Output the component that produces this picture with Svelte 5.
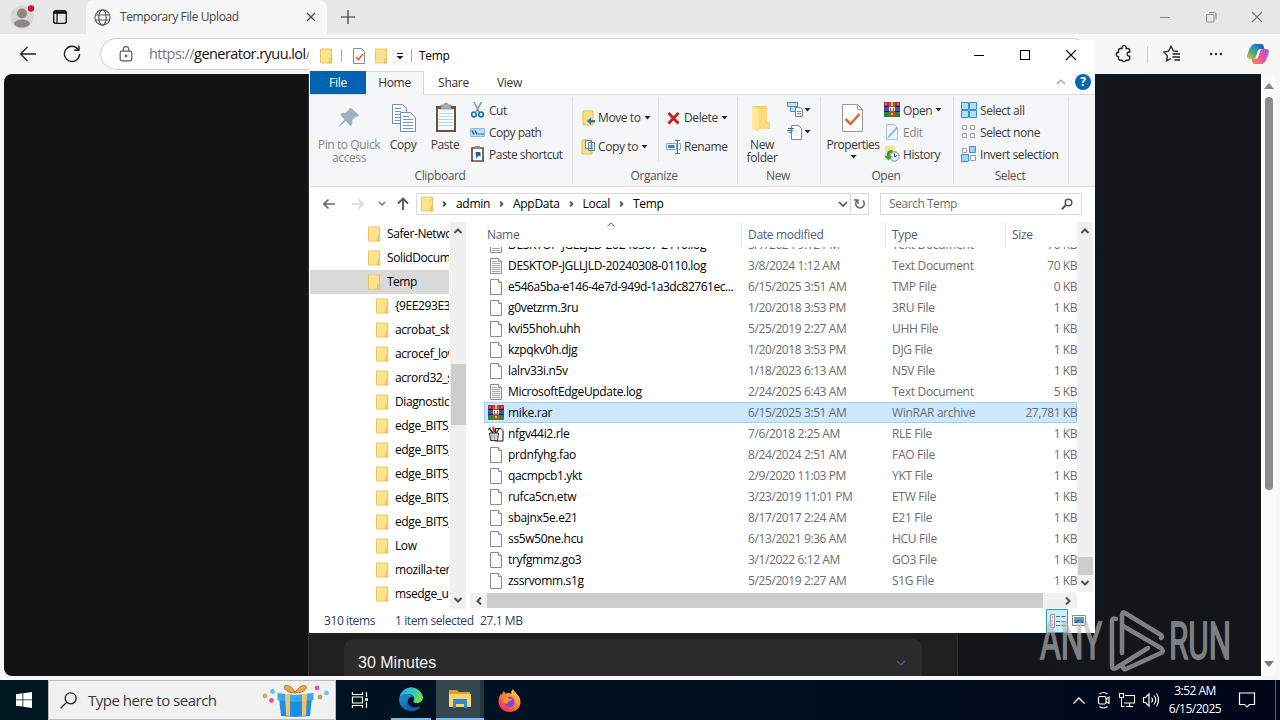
<script lang="ts">
  interface FileRow {
    name: string;
    date: string;
    type: string;
    size: string;
    icon?: string;
  }

  const files: FileRow[] = [
    { name: 'DESKTOP-JGLLJLD-20240307-2110.log', date: '3/7/2024 9:12 PM', type: 'Text Document', size: '70 KB', icon: 'log' },
    { name: 'DESKTOP-JGLLJLD-20240308-0110.log', date: '3/8/2024 1:12 AM', type: 'Text Document', size: '70 KB', icon: 'log' },
    { name: 'e546a5ba-e146-4e7d-949d-1a3dc82761ec...', date: '6/15/2025 3:51 AM', type: 'TMP File', size: '0 KB' },
    { name: 'g0vetzrm.3ru', date: '1/20/2018 3:53 PM', type: '3RU File', size: '1 KB' },
    { name: 'kvi55hoh.uhh', date: '5/25/2019 2:27 AM', type: 'UHH File', size: '1 KB' },
    { name: 'kzpqkv0h.djg', date: '1/20/2018 3:53 PM', type: 'DJG File', size: '1 KB' },
    { name: 'lalrv33i.n5v', date: '1/18/2023 6:13 AM', type: 'N5V File', size: '1 KB' },
    { name: 'MicrosoftEdgeUpdate.log', date: '2/24/2025 6:43 AM', type: 'Text Document', size: '5 KB', icon: 'log' },
    { name: 'mike.rar', date: '6/15/2025 3:51 AM', type: 'WinRAR archive', size: '27,781 KB', icon: 'rar' },
    { name: 'nfgv44i2.rle', date: '7/6/2018 2:25 AM', type: 'RLE File', size: '1 KB', icon: 'rle' },
    { name: 'prdnfyhg.fao', date: '8/24/2024 2:51 AM', type: 'FAO File', size: '1 KB' },
    { name: 'qacmpcb1.ykt', date: '2/9/2020 11:03 PM', type: 'YKT File', size: '1 KB' },
    { name: 'rufca5cn.etw', date: '3/23/2019 11:01 PM', type: 'ETW File', size: '1 KB' },
    { name: 'sbajnx5e.e21', date: '8/17/2017 2:24 AM', type: 'E21 File', size: '1 KB' },
    { name: 'ss5w50ne.hcu', date: '6/13/2021 9:36 AM', type: 'HCU File', size: '1 KB' },
    { name: 'tryfgmmz.go3', date: '3/1/2022 6:12 AM', type: 'GO3 File', size: '1 KB' },
    { name: 'zssrvomm.s1g', date: '5/25/2019 2:27 AM', type: 'S1G File', size: '1 KB' }
  ];

  const folders = [
    'Safer-Networking', 'SolidDocuments', 'Temp', '{9EE293E3-8F1C}', 'acrobat_sbx', 'acrocef_low',
    'acrord32_sbx', 'Diagnostics', 'edge_BITS_1', 'edge_BITS_2', 'edge_BITS_3', 'edge_BITS_4',
    'edge_BITS_5', 'Low', 'mozilla-temp', 'msedge_url'
  ];

  const crumbs = ['admin', 'AppData', 'Local', 'Temp'];

  let selected = $state('mike.rar');
</script>

{#snippet folder()}
  <svg class="i16" viewBox="0 0 16 16">
    <path d="M2.500 1h11v14h-11z" fill="#fbdf83" stroke="#e9c65e" />
    <path d="M3 1.500h8v13H3z" fill="#ffe38d" />
    <path d="M12.500 10l1.500 1v4h-3z" fill="#f8d468" stroke="#dfb650" stroke-width=".7" />
  </svg>
{/snippet}

{#snippet rar()}
  <svg class="i16" viewBox="0 0 16 16" shape-rendering="crispEdges">
    <path d="M0 0h16v5H0z" fill="#b52a3c" />
    <path d="M0 5h16v5H0z" fill="#3b52b4" />
    <path d="M0 10h16v5H0z" fill="#28833c" />
    <path d="M0 4h16v1H0zM0 9h16v1H0z" fill="#301c40" />
    <path d="M5 0h6v15H5z" fill="#a25a2a" />
    <path d="M5 5h6v4H5z" fill="#f1e9e4" />
    <path d="M6 6h1v3H6zM9 6h1v3H9z" fill="#be3d33" />
    <path d="M7 0h2v4H7zM7 11h2v2H7z" fill="#e7b14b" />
    <path d="M1 1h2v2H1zM13 1h2v2h-2z" fill="#e0566a" />
  </svg>
{/snippet}

{#snippet fileIcon(kind: string)}
  {#if kind === 'rar'}
    {@render rar()}
  {:else if kind === 'rle'}
    <svg class="i16" viewBox="0 0 16 16">
      <path d="M7.500 2.500h5.500l2 2v10.500h-8z" fill="#fff" stroke="#111" />
      <path d="M1.500 7h9L9.500 14.500h-7z" fill="#ddd" stroke="#333" />
      <path d="M4 8v5.500M6.500 8v5.500" stroke="#999" />
      <path d="M1 2l4 5" stroke="#222" stroke-width="1.500" />
      <path d="M5 1l1.500 5.500" stroke="#d82035" stroke-width="2" />
      <path d="M11 3L8 7" stroke="#444" stroke-width="1.300" />
      <path d="M0 3.500h2M2 1v2" stroke="#28a" />
    </svg>
  {:else}
    <svg class="i16" viewBox="0 0 16 16">
      <path d="M2.500.5h8l3 3v12h-11z" fill="#fcfcfc" stroke="#8b8b8b" />
      <path d="M10.500.5v3h3" fill="#eee" stroke="#8b8b8b" />
      {#if kind === 'log'}
        <path d="M4 5.500h8M4 7.500h8M4 9.500h8M4 11.500h8M4 13.500h8M4 3.500h5" stroke="#a4a8aa" />
      {/if}
    </svg>
  {/if}
{/snippet}

{#snippet chev(d: string)}
  <svg class="chev" viewBox="0 0 10 10"><path {d} fill="none" stroke="#505050" stroke-width="2" /></svg>
{/snippet}

{#snippet caret()}
  <svg class="caret" viewBox="0 0 7 4"><path d="M.5 0h6l-3 3.500z" fill="#222" /></svg>
{/snippet}

<div class="desktop">
  <div class="browser">
    <div class="tabstrip">
      <svg class="avatar" viewBox="0 0 26 26">
        <circle cx="12" cy="14" r="11.500" fill="#d9d7d5" />
        <circle cx="12" cy="10.500" r="5" fill="#8b8785" />
        <ellipse cx="12" cy="20.500" rx="8" ry="4" fill="#8b8785" />
        <circle cx="21" cy="5.500" r="3.200" fill="#d4122c" />
      </svg>
      <svg class="workspaces" viewBox="0 0 16 16">
        <rect x="1.700" y="1.700" width="12.600" height="12.600" rx="2" fill="none" stroke="#111" stroke-width="1.300" />
        <path d="M2 3.500h12" stroke="#111" stroke-width="2.600" />
        <path d="M5 4v10" stroke="#111" stroke-width="1.200" />
      </svg>
      <div class="tab">
        <svg class="i17" viewBox="0 0 17 17" fill="none" stroke="#5d5d5d" stroke-width="1.200">
          <circle cx="8.500" cy="8.500" r="7.600" />
          <ellipse cx="8.500" cy="8.500" rx="3.700" ry="7.600" />
          <path d="M1.500 6h14M1.500 11h14" />
        </svg>
        <span class="tab-title">Temporary File Upload</span>
        <svg class="tab-close" viewBox="0 0 10 10"><path d="M1 1l8 8M9 1L1 9" stroke="#444" stroke-width="1.200" /></svg>
      </div>
      <svg class="new-tab" viewBox="0 0 14 14"><path d="M7 0v14M0 7h14" stroke="#333" stroke-width="1.200" /></svg>
      <div class="win-buttons">
        <svg viewBox="0 0 12 12"><path d="M1 6.500h10" stroke="#888" /></svg>
        <svg viewBox="0 0 12 12" fill="none" stroke="#888"><rect x="1.500" y="3.500" width="7.500" height="7.500" rx="1" /><path d="M4 1.500h5.500q1.500 0 1.500 1.500v5.500" /></svg>
        <svg viewBox="0 0 12 12"><path d="M1 1l10 10M11 1L1 11" stroke="#777" stroke-width="1.100" /></svg>
      </div>
    </div>
    <div class="toolbar">
      <svg class="back" viewBox="0 0 18 16" fill="none" stroke="#222" stroke-width="1.300"><path d="M17 8H2M8.500 1L1.500 8l7 7" /></svg>
      <svg class="reload" viewBox="0 0 18 18" fill="none" stroke="#222" stroke-width="1.400"><path d="M15.200 4.500A7.600 7.600 0 1 0 16.600 9M16 .5v4.700h-4.800" /></svg>
      <div class="url">
        <svg class="lock" viewBox="0 0 14 16" fill="none" stroke="#5d5d5d" stroke-width="1.200"><rect x="1.200" y="5.200" width="11.600" height="9.600" rx="1.800" /><path d="M4.200 5V3.500a2.800 2.800 0 0 1 5.600 0V5" /><circle cx="7" cy="10" r=".8" fill="#5d5d5d" /></svg>
        <span>https://<b>generator.ryuu.lol</b>/</span>
      </div>
      <div class="tools">
        <svg class="ext" viewBox="0 0 18 18" fill="none" stroke="#222" stroke-width="1.400"><path d="M3.500 5.500q0-2 2-2H7a2.200 2.200 0 1 1 4.200 0h1.500q2 0 2 2V7h-1a2.200 2.200 0 0 0 0 4.200h1v2q0 2-2 2H11a2.200 2.200 0 0 1-4 0H5.500q-2 0-2-2v-1.500a2.200 2.200 0 0 1 0-4.400z" /></svg>
        <i></i>
        <svg class="fav" viewBox="0 0 18 18" fill="none" stroke="#222" stroke-width="1.300"><path d="M15 6.500l-4.700-.5L8 1.200 5.600 6.100.9 6.900l3.500 3.700-.8 5.200 4.400-2.300M9.500 9H17M9.500 12H17M11.500 15H17" /></svg>
        <svg class="dots" viewBox="0 0 18 18" fill="#222"><circle cx="4" cy="9" r="1.200" /><circle cx="9" cy="9" r="1.200" /><circle cx="14" cy="9" r="1.200" /></svg>
        <svg class="copilot" viewBox="0 0 22 20">
          <defs>
            <linearGradient id="cpA" x1="0" y1="1" x2="1" y2="0"><stop offset="0" stop-color="#f4c735" /><stop offset=".35" stop-color="#4fae6c" /><stop offset=".65" stop-color="#1b8fd6" /><stop offset="1" stop-color="#1749b8" /></linearGradient>
            <linearGradient id="cpB" x1="0" y1="1" x2="1" y2="0"><stop offset="0" stop-color="#f98a47" /><stop offset=".5" stop-color="#e7529d" /><stop offset="1" stop-color="#a45ce8" /></linearGradient>
          </defs>
          <path d="M7 0h7q2 0 2.600 2l.8 3h-4q-2 0-2.600 2l-2 6q-.6 2-2.400 2H3q-3 0-3-3Q3 1 7 0z" fill="url(#cpA)" />
          <path d="M15 20H8q-2 0-2.600-2l-.8-3h4q2 0 2.600-2l2-6q.6-2 2.400-2H19q3 0 3 3-3 11-7 12z" fill="url(#cpB)" />
          <path d="M13 7l-2.700 6.500q-.5 1.300-1.800 1.300l2.700-7q.5-1.300 1.800-.8z" fill="#f7f7f7" />
        </svg>
      </div>
    </div>
    <div class="viewport">
      <div class="page">
        <div class="card">
          <div class="duration">
            <span>30 Minutes</span>
            <svg viewBox="0 0 10 6"><path d="M1 1l4 4 4-4" fill="none" stroke="#2f5d9e" stroke-width="1.400" /></svg>
          </div>
        </div>
      </div>
      <div class="page-scroll">
        <svg viewBox="0 0 10 6"><path d="M0 6l5-6 5 6z" fill="#888" /></svg>
        <div class="page-thumb"></div>
        <svg viewBox="0 0 10 6"><path d="M0 0l5 6 5-6z" fill="#777" /></svg>
      </div>
    </div>
  </div>

  <div class="taskbar">
    <div class="start">
      <svg viewBox="0 0 16 16" fill="#fff"><path d="M0 2.200l6.500-.9v6.200H0zM7.300 1.200L16 0v7.500H7.300zM0 8.300h6.500v6.300L0 13.700zM7.300 8.300H16V16l-8.700-1.300z" /></svg>
    </div>
    <div class="search">
      <svg class="glass" viewBox="0 0 17 17" fill="none" stroke="#222" stroke-width="1.300"><circle cx="10.700" cy="6.300" r="5.500" /><path d="M6.800 10.200L.7 16.300" /></svg>
      <span>Type here to search</span>
      <svg class="gift" viewBox="0 0 68 36">
        <g><circle cx="3" cy="14" r="2.400" fill="#d8a66a" /><circle cx="10.500" cy="9.500" r="2.400" fill="#58cbd6" /><circle cx="9.500" cy="18.500" r="2.400" fill="#ec4fa6" /><circle cx="55" cy="6" r="2.400" fill="#ec4fa6" /><circle cx="64.500" cy="11" r="2.400" fill="#63cbed" /><circle cx="58" cy="15" r="2.400" fill="#c99a52" /></g>
        <path d="M17 15h33l-2 19-15 1-14-1z" fill="#1d8fe0" />
        <path d="M15.500 11l17 2 19-2v7l-19 2-17-2z" fill="#37aaf2" />
        <path d="M23 12h5v22l-4-.5zM40 12h5l-1 21.500-4 .5z" fill="#f5c266" />
        <path d="M33 11C23 11 20 4 24 3.500s7 3 9 7c3-4 7-8 10-7s2 7-10 7.500z" fill="#e7a944" stroke="#b97c28" />
      </svg>
    </div>
    <div class="task">
      <svg class="i18" viewBox="0 0 18 18" fill="none" stroke="#fff" stroke-width="1.200"><path d="M1.500 1v2.500h10V1M1.500 17v-2.500h10V17M1.500 6h10v6h-10zM15.500 1v5M15.500 11v6" /><path d="M14 8.500h3" stroke-width="2.500" /></svg>
    </div>
    <div class="task open edge">
      <svg viewBox="0 0 24 24">
        <defs>
          <linearGradient id="edA" x1="0" y1="0" x2="1" y2=".3"><stop offset="0" stop-color="#21a7dd" /><stop offset=".6" stop-color="#35c6c0" /><stop offset="1" stop-color="#66e254" /></linearGradient>
          <linearGradient id="edB" x1="0" y1="0" x2="1" y2="1"><stop offset="0" stop-color="#1c8fd8" /><stop offset="1" stop-color="#134f9d" /></linearGradient>
        </defs>
        <path d="M.3 11A12 12 0 0 1 24 10c0 4-3 6-6 6-4 0-4-2-3-3.300C16 10 13 7 9 7c-4 0-7 2-8.700 4z" fill="url(#edA)" />
        <path d="M0 12c1-3 5-5 9-5 3 0 5 1.500 5.800 3-3-.8-6.300 1-6 5 .4 5 6 7 12.700 4.500C18 25 10 25 5.500 22 1.500 19.500 0 16 0 12z" fill="url(#edB)" />
        <path d="M8.900 13.500C8 19 14 23 21.500 19.300 19 23 15.500 24 12 24 7 22 6 17 8.900 13.500z" fill="#155cae" />
      </svg>
    </div>
    <div class="task open files">
      <svg viewBox="0 0 24 20">
        <path d="M1 1h8l2 2h11v15H1z" fill="#e79a27" />
        <path d="M1 5h22v13H1z" fill="#fbd56b" />
        <path d="M5 11q0-1 1-1h12q1 0 1 1v8h-3v-4H8v4H5z" fill="#3989c9" />
      </svg>
    </div>
    <div class="task firefox">
      <svg viewBox="0 0 24 24">
        <defs><linearGradient id="ff" x1="1" y1="0" x2=".2" y2="1"><stop offset="0" stop-color="#fff04b" /><stop offset=".4" stop-color="#ff9a2e" /><stop offset="1" stop-color="#f0245e" /></linearGradient></defs>
        <path d="M3 5l1 1 2-4 2 3c2-1 4-1 6 0-.5-2 0-3 1.500-5C17 4 23 6 23.500 13c0 7-5 11-11.500 11S.500 19 .500 13C.500 9 2 7 3 5z" fill="url(#ff)" />
        <circle cx="12" cy="13.500" r="5.300" fill="#7b46df" />
        <path d="M5 10c2-2 5-1.500 7 .5h3c-1 2-3 2-4 2.500-1 1-.5 2.500-2 2.500-2 0-4-2-4-5.500z" fill="#ff9530" />
      </svg>
    </div>
    <div class="tray">
      <svg class="up" viewBox="0 0 12 7" fill="none" stroke="#fff" stroke-width="1.300"><path d="M.5 6.500L6 1l5.500 5.500" /></svg>
      <svg viewBox="0 0 18 18" fill="none" stroke="#fff" stroke-width="1.200"><rect x="3.500" y="5.500" width="7.500" height="7.500" rx="1.500" /><path d="M11 8l3-2v6.500l-3-2M4.500 3Q8.500 0 12.500 3M4.500 15.500q4 3 8 0" /></svg>
      <svg viewBox="0 0 18 18" fill="none" stroke="#fff" stroke-width="1.100"><path d="M6 4.500h9.500v7.500H5M10.500 12v3.500M7 15.500h7M.5 2.500h4v4h-4zM2.500 7v8.500h3M0 2.500h5" /></svg>
      <svg viewBox="0 0 18 18" fill="none" stroke="#fff" stroke-width="1.200"><path d="M.5 6.500h2L6 3v12l-3.500-3.500h-2zM8.500 6.500q2 2.500 0 5M11 4.500q3.500 4.500 0 9M13.500 2.500q4 6.500 0 13" /></svg>
      <div class="clock"><span>3:52 AM</span><span>6/15/2025</span></div>
      <svg class="notify" viewBox="0 0 18 18" fill="none" stroke="#fff" stroke-width="1.200"><path d="M1.500 2h15v11.500h-5L9 16l-2.500-2.500h-5z" /></svg>
    </div>
  </div>

  <div class="explorer">
    <div class="titlebar">
      {@render folder()}
      <i class="bar"></i>
      <svg class="i16 check" viewBox="0 0 16 16"><path d="M2.500.5h8l3 3v12h-11z" fill="#fff" stroke="#7d8da3" /><path d="M5 9l2.500 2.500L12 6" fill="none" stroke="#d95f2b" stroke-width="1.600" /></svg>
      {@render folder()}
      <svg class="customize" viewBox="0 0 8 8"><path d="M1 1.500h6" stroke="#222" /><path d="M.5 4h7L4 7.500z" fill="#222" /></svg>
      <i class="bar second"></i>
      <span class="window-title">Temp</span>
      <div class="controls">
        <svg viewBox="0 0 12 12"><path d="M1 5.500h10" stroke="#000" /></svg>
        <svg viewBox="0 0 12 12"><rect x="1.500" y=".5" width="9" height="9" fill="none" stroke="#000" /></svg>
        <svg viewBox="0 0 12 12"><path d="M1 0l10 10M11 0L1 10" stroke="#000" stroke-width="1.100" /></svg>
      </div>
    </div>

    <div class="tabs">
      <span class="file">File</span>
      <span class="home">Home</span>
      <span class="share">Share</span>
      <span class="view">View</span>
      <svg class="collapse" viewBox="0 0 10 6"><path d="M1 5l4-4 4 4" fill="none" stroke="#999" stroke-width="1.200" /></svg>
      <span class="help">?</span>
    </div>

    <div class="ribbon">
      <div class="group clipboard">
        <div class="body">
          <div class="big pin">
            <svg viewBox="0 0 32 32"><path d="M18 6l8 7-2 2-1-.5-4 4q1 4-1.500 5.500l-5-5-6 5.500-1 .5.500-1.500 5.500-6-4.500-5q2-2.500 5.500-1.500l4-4-.5-1z" fill="#9eb0c3" /></svg>
            <span>Pin to Quick access</span>
          </div>
          <div class="big">
            <svg viewBox="0 0 32 32"><g fill="#fff" stroke="#7391ae"><path d="M5.500 2.500h10l4 4v15h-14z" /><path d="M13.500 10.500h10l5 5v14h-15z" /></g><path d="M8 6.500h6M8 9.500h6M8 12.500h5M8 15.500h5M8 18.500h5M16 14.500h6M16 17.500h10M16 20.500h10M16 23.500h10M16 26.500h10" stroke="#5d9fdc" /></svg>
            <span>Copy</span>
          </div>
          <div class="big">
            <svg viewBox="0 0 32 32"><path d="M7 4h20v26H7z" fill="#6f5138" /><path d="M9 7h16v21H9z" fill="#f5faff" /><path d="M12 3h3a2 2 0 0 1 4 0h3v4H12z" fill="#a9adb2" stroke="#777" stroke-width=".6" /><path d="M10 11.500h14M10 14.500h14M10 17.500h14M10 20.500h14M10 23.500h14" stroke="#b9d5ec" /></svg>
            <span>Paste</span>
          </div>
          <div class="small first">
            <div>
              <svg class="i16" viewBox="0 0 16 16"><path d="M4 0l5 10M11.500 0L6 10" stroke="#7494ae" stroke-width="1.500" /><g fill="none" stroke="#1c75bb" stroke-width="1.700"><circle cx="4" cy="12.500" r="2.300" /><circle cx="11" cy="12.500" r="2.300" /></g></svg>
              <span>Cut</span>
            </div>
            <div>
              <svg class="i16" viewBox="0 0 16 16"><path d="M.5 4.500h14v8H.5z" fill="#b8e2fa" stroke="#8abde0" /><path d="M2 6.500l2 4M5 6.500l2 4M8.500 10h1M10.500 10h1M12.500 10h1" stroke="#174773" stroke-width="1.300" /></svg>
              <span>Copy path</span>
            </div>
            <div>
              <svg class="i16" viewBox="0 0 16 16"><path d="M2 2h11v13H2z" fill="#fff" stroke="#654b36" stroke-width="1.700" /><path d="M5 0h5v3H5z" fill="#8d8d8d" /><path d="M5.500 6h5v5L8.800 9.500 6 12.500V9z" fill="#1f5fa9" /></svg>
              <span>Paste shortcut</span>
            </div>
          </div>
        </div>
        <div class="label">Clipboard</div>
      </div>

      <div class="group organize">
        <div class="body">
          <div class="small two">
            <div>
              <svg class="i16" viewBox="0 0 16 16"><path d="M2 1h10v14H2z" fill="#fbdf83" stroke="#e4bf55" /><path d="M6 11l4-3.500V10h4v2.500h-4V15z" fill="#2b74ba" /></svg>
              <span>Move to</span>{@render caret()}
            </div>
            <div>
              <svg class="i16" viewBox="0 0 16 16"><path d="M1 1h10v14H1z" fill="#fbdf83" stroke="#e4bf55" /><path d="M4.500 1.500h6v8h-6zM7.500 3.500h6v8h-6z" fill="#fff" stroke="#5682ad" /><path d="M9 6h3M9 8h3M9 10h3" stroke="#5682ad" /></svg>
              <span>Copy to</span>{@render caret()}
            </div>
          </div>
          <div class="small two right">
            <div>
              <svg class="i16" viewBox="0 0 16 16"><path d="M2.500 3l10 10.500M12.500 3l-10 10.500" stroke="#d51a20" stroke-width="2.800" /></svg>
              <span>Delete</span>{@render caret()}
            </div>
            <div>
              <svg class="i16" viewBox="0 0 16 16"><path d="M.5 4.500h10v6H.500zM12.500 4.500h2v6h-2" fill="#fff" stroke="#89a3bb" /><path d="M2 6h6.500v3H2z" fill="#2f83c7" /><path d="M9 1.500h5M11.500 2v12M9 14.500h5" stroke="#5e6b76" /></svg>
              <span>Rename</span>
            </div>
          </div>
        </div>
        <div class="label">Organize</div>
      </div>

      <div class="group new">
        <div class="body">
          <div class="big folder-big">
            <svg viewBox="0 0 32 32"><path d="M6 4h15v23H6z" fill="#f5cf68" /><path d="M6 4l7 3v23l-7-3z" fill="#ffe59b" /><path d="M13 7h8v12l3 1v7H13z" fill="#fada7b" /></svg>
            <span>New folder</span>
          </div>
          <div class="small icons">
            <div>
              <svg class="i16" viewBox="0 0 16 16" fill="#fff" stroke="#5688ab"><path d="M.5.5h10v4H.5zM3.500 4.500h7v5h-7z" fill="#bfe1ef" /><path d="M8.500 5.500h5l2 2v7h-7z" /><path d="M10 9.500h4M10 11.500h4" stroke="#888" /></svg>{@render caret()}
            </div>
            <div>
              <svg class="i16" viewBox="0 0 16 16" fill="#fff" stroke="#778898"><path d="M4.500 1.500h7l3 3v11h-10z" /><path d="M1 4.500h6M0 6.500h6M2 8.500h3" stroke="#2278b8" /></svg>{@render caret()}
            </div>
          </div>
        </div>
        <div class="label">New</div>
      </div>

      <div class="group opening">
        <div class="body">
          <div class="big props">
            <svg viewBox="0 0 32 32"><path d="M5.500 2.500h15l5 5v22h-20z" fill="#fff" stroke="#999" /><path d="M20.500 2.500v5h5" fill="none" stroke="#999" /><path d="M8.500 17l5 5 9-10" fill="none" stroke="#ec642b" stroke-width="2.500" /></svg>
            <span>Properties</span>{@render caret()}
          </div>
          <div class="small">
            <div>{@render rar()}<span>Open</span>{@render caret()}</div>
            <div class="disabled">
              <svg class="i16" viewBox="0 0 16 16"><path d="M2.500.5h8l3 3v12h-11z" fill="#eef4fa" stroke="#abc0d2" /><path d="M14 4l-8 9-2 1 .5-2.500L12.500 3z" fill="#9bb7d2" /></svg>
              <span>Edit</span>
            </div>
            <div>
              <svg class="i16" viewBox="0 0 16 16"><path d="M1 0h10v14H1z" fill="#fde285" /><circle cx="10.500" cy="10.500" r="4.700" fill="#e4edf1" stroke="#7c8b94" /><path d="M10.500 7.500v3.500l2.500-1.500" fill="none" stroke="#345" /><path d="M8 4Q2 4 3 10l-3-.5 4.500 5L8 10H5.500Q5 7 9 6z" fill="#29a144" /></svg>
              <span>History</span>
            </div>
          </div>
        </div>
        <div class="label">Open</div>
      </div>

      <div class="group selecting">
        <div class="body">
          <div class="small">
            <div>
              <svg class="i16" viewBox="0 0 16 16" fill="#b5defb" stroke="#3a8fd2"><path d="M.5.5h7v7h-7zM8.500.5h7v7h-7zM.5 8.500h7v7h-7zM8.500 8.500h7v7h-7z" /></svg>
              <span>Select all</span>
            </div>
            <div>
              <svg class="i16" viewBox="0 0 16 16" fill="#fff" stroke="#9a9a9a"><path d="M1.500 1.500h4v4h-4zM9.500 1.500h4v4h-4zM1.500 9.500h4v4h-4zM9.500 9.500h4v4h-4z" /></svg>
              <span>Select none</span>
            </div>
            <div>
              <svg class="i16" viewBox="0 0 16 16"><path d="M8.500.5h6v6h-6zM.5 8.500h7v7h-7z" fill="#9fd5fb" stroke="#3a8fd2" /><path d="M1.500 2.500h4v4h-4zM9.500 9.500h5v5h-5z" fill="#fff" stroke="#9a9a9a" /></svg>
              <span>Invert selection</span>
            </div>
          </div>
        </div>
        <div class="label">Select</div>
      </div>
    </div>

    <div class="address">
      <svg class="arrow" viewBox="0 0 14 14" fill="none" stroke="#666" stroke-width="1.700"><path d="M13 7H2M6.500 2.500L2 7l4.500 4.500" /></svg>
      <svg class="arrow forward" viewBox="0 0 14 14" fill="none" stroke="#d5d5d5" stroke-width="1.700"><path d="M1 7h11M7.500 2.500L12 7l-4.500 4.500" /></svg>
      <svg class="recent" viewBox="0 0 8 6"><path d="M1 1l3 3 3-3" fill="none" stroke="#777" stroke-width="1.500" /></svg>
      <svg class="arrow upward" viewBox="0 0 14 14" fill="none" stroke="#555" stroke-width="1.800"><path d="M7 13V2M2 6.500l5-5 5 5" /></svg>
      <div class="path">
        {@render folder()}
        {#each crumbs as crumb}
          {@render chev('M3.500 2.500L6 5 3.500 7.500')}
          <span>{crumb}</span>
        {/each}
        <div class="path-end">
          <svg viewBox="0 0 10 6"><path d="M1 1l4 4 4-4" fill="none" stroke="#555" stroke-width="1.700" /></svg>
        </div>
      </div>
      <div class="refresh">
        <svg viewBox="0 0 12 12" fill="none" stroke="#666" stroke-width="1.500"><path d="M9 2.500a4.300 4.300 0 1 1-6 0M4 6V2H0" /></svg>
      </div>
      <div class="find">
        <span>Search Temp</span>
        <svg viewBox="0 0 12 12" fill="none" stroke="#555" stroke-width="1.500"><circle cx="7.500" cy="4.500" r="3.300" /><path d="M5 7L.8 11.200" stroke-width="2" /></svg>
      </div>
    </div>

    <div class="content">
      <div class="tree">
        {#each folders as name, i}
          <div class="node" class:child={i > 2} class:current={name === 'Temp'}>
            {@render folder()}
            <span>{name}</span>
          </div>
        {/each}
      </div>
      <div class="vscroll tree-scroll">
        {@render chev('M1.500 7L5 3.500 8.500 7')}
        <div class="thumb"></div>
        {@render chev('M1.500 3L5 6.500 8.500 3')}
      </div>
      <div class="listing">
        <div class="upper">
          <div class="table">
            <div class="head">
              <span class="c-name">Name<svg viewBox="0 0 8 5"><path d="M.5 4.500L4 1l3.500 3.500" fill="none" stroke="#666" /></svg></span>
              <span class="c-date">Date modified</span>
              <span class="c-type">Type</span>
              <span class="c-size">Size</span>
            </div>
            <div class="rows">
              {#each files as f}
                <!-- svelte-ignore a11y_click_events_have_key_events, a11y_no_static_element_interactions -->
                <div class="row" class:selected={f.name === selected} onclick={() => (selected = f.name)}>
                  {@render fileIcon(f.icon ?? 'blank')}
                  <span class="name" class:long={f.name.endsWith('...')}>{f.name}</span>
                  <span class="date">{f.date}</span>
                  <span class="type">{f.type}</span>
                  <span class="size">{f.size}</span>
                </div>
              {/each}
            </div>
          </div>
          <div class="vscroll list-scroll">
            {@render chev('M1.500 7L5 3.500 8.500 7')}
            <div class="thumb"></div>
            {@render chev('M1.500 3L5 6.500 8.500 3')}
          </div>
        </div>
        <div class="hscroll">
          {@render chev('M7 1.500L3.500 5 7 8.500')}
          <div class="thumb"></div>
          {@render chev('M3 1.500L6.500 5 3 8.500')}
        </div>
      </div>
    </div>

    <div class="status">
      <span class="count">310 items</span>
      <span class="sel">1 item selected</span>
      <span>27.1 MB</span>
      <div class="modes">
        <svg class="details" viewBox="0 0 22 24"><path d="M.5.5h21v23H.5z" fill="#cdeefb" stroke="#2a9bc0" /><path d="M4.500 5.500h4v13h-4z" fill="#fff" stroke="#a18ca8" /><path d="M6 8h1M6 12h1M6 16h1" stroke="#b33" /><path d="M10 7.500h4M15.500 7.500h4M10 12.500h4M15.500 12.500h4M10 16.500h4M15.500 16.500h4" stroke="#666" /></svg>
        <svg class="thumbs" viewBox="0 0 14 12"><path d="M.5.5h13v10H.5z" fill="#fff" stroke="#8a8a8a" /><path d="M2 2h10v6H2z" fill="#5a9bdc" /><path d="M2 8l4-3 6 1.500V8z" fill="#214f86" /></svg>
      </div>
    </div>
  </div>

  <svg class="watermark" viewBox="0 0 194 66">
    <g fill="#b9b9b9" stroke="#b9b9b9" stroke-width="1.600">
      <text x="1" y="49.500" textLength="62" lengthAdjust="spacingAndGlyphs">ANY</text>
      <text x="130" y="49.500" textLength="62" lengthAdjust="spacingAndGlyphs">RUN</text>
    </g>
    <g fill="none" stroke="#b9b9b9" stroke-width="4.500" stroke-linejoin="round" stroke-linecap="round">
      <path d="M77 10q-4-2-4 3v44q0 4 4 2l32-20" />
      <path d="M83 44V6q0-4 3-2l36 22q2 1.500 0 3" />
      <path d="M84 17l38 22q4 3 0 5L87 60q-3 1-3-2" />
    </g>
  </svg>
</div>

<style>
  :global(body) {
    margin: 0;
  }

  .desktop {
    position: relative;
    width: 1280px;
    height: 720px;
    overflow: hidden;
    display: flex;
    flex-direction: column;
    font-family: 'Open Sans', 'Noto Sans', sans-serif;
    font-size: 12px;
    letter-spacing: -0.3px;
    white-space: nowrap;
    color: #000;
  }

  svg {
    display: block;
    flex: none;
  }

  .i16 {
    width: 16px;
    height: 16px;
  }

  .i17 {
    width: 17px;
    height: 17px;
  }

  .i18 {
    width: 18px;
    height: 18px;
  }

  .chev {
    width: 10px;
    height: 10px;
  }

  .caret {
    width: 7px;
    height: 4px;
    margin-left: 3px;
  }

  /* browser */
  .browser {
    height: 680px;
    display: flex;
    flex-direction: column;
    background: #f7f7f7;
  }

  .tabstrip {
    height: 34px;
    background: #e7e7e7;
    display: flex;
    align-items: center;
  }

  .avatar {
    width: 26px;
    height: 26px;
    margin-left: 10px;
    margin-top: -2px;
  }

  .workspaces {
    width: 16px;
    height: 16px;
    margin-left: 16px;
  }

  .tab {
    width: 241px;
    height: 34px;
    margin-left: 18px;
    padding: 0 11px 0 8px;
    box-sizing: border-box;
    background: #f7f7f7;
    border-radius: 8px 8px 0 0;
    display: flex;
    align-items: center;
  }

  .tab-title {
    margin-left: 9px;
    margin-top: -1px;
    color: #444;
    flex: 1;
    letter-spacing: -0.4px;
  }

  .tab-close {
    width: 10px;
    height: 10px;
  }

  .new-tab {
    width: 14px;
    height: 14px;
    margin-left: 14px;
  }

  .win-buttons {
    margin-left: auto;
    margin-right: 17px;
    display: flex;
    gap: 34px;
  }

  .win-buttons svg {
    width: 12px;
    height: 12px;
  }

  .toolbar {
    height: 40px;
    display: flex;
    align-items: center;
  }

  .back {
    width: 18px;
    height: 16px;
    margin-left: 19px;
  }

  .reload {
    width: 18px;
    height: 18px;
    margin-left: 26px;
  }

  .url {
    width: 989px;
    height: 32px;
    box-sizing: border-box;
    margin-left: 19px;
    background: #fff;
    border: 1px solid #d0d0d0;
    border-radius: 16px;
    display: flex;
    align-items: center;
    font-size: 14.500px;
    color: #777;
    letter-spacing: -0.55px;
  }

  .url span {
    margin-top: -1px;
  }

  .url b {
    font-weight: 400;
    color: #111;
  }

  .lock {
    width: 14px;
    height: 16px;
    margin: 0 16px 0 18px;
  }

  .tools {
    display: flex;
    align-items: center;
    margin-left: auto;
    padding-right: 11px;
  }

  .tools svg {
    width: 18px;
    height: 18px;
  }

  .tools .ext {
    margin-right: -1px;
  }

  .tools i {
    width: 1px;
    height: 17px;
    background: #ccc;
    margin: 0 15px;
  }

  .tools .dots {
    margin: 0 22px 0 26px;
  }

  .tools .copilot {
    width: 22px;
    height: 20px;
  }

  .viewport {
    margin: 0 4px 4px;
    height: 602px;
    display: flex;
    background: #fbfbfb;
    border-radius: 8px;
    overflow: hidden;
  }

  .page {
    width: 1257px;
    padding-left: 304px;
    box-sizing: border-box;
    background: linear-gradient(90deg, #131313 70%, #13171a 85%, #11151a);
  }

  .card {
    width: 650px;
    height: 602px;
    box-sizing: border-box;
    border: solid #303030;
    border-width: 0 1px;
    background: #1f1f1f;
    display: flex;
    align-items: flex-end;
    padding-left: 35px;
  }

  .duration {
    width: 578px;
    height: 37px;
    box-sizing: border-box;
    padding: 9px 16px 0 14px;
    background: #2b2b2b;
    border-radius: 9px 9px 0 0;
    display: flex;
    justify-content: space-between;
    color: #f2f2f2;
    font-family: 'Liberation Sans', Arial, sans-serif;
    font-size: 16px;
    letter-spacing: 0;
    line-height: 30px;
  }

  .duration svg {
    width: 10px;
    height: 6px;
    margin-top: 12px;
  }

  .page-scroll {
    width: 15px;
    display: flex;
    flex-direction: column;
    align-items: center;
    padding: 9px 0;
    box-sizing: border-box;
  }

  .page-scroll svg {
    width: 10px;
    height: 6px;
  }

  .page-thumb {
    width: 8px;
    height: 393px;
    margin: 8px 0 auto;
    border-radius: 4px;
    background: #8b8b8b;
  }

  /* taskbar */
  .taskbar {
    height: 40px;
    display: flex;
    background: linear-gradient(90deg, #001720, #000e20 60%, #00051a);
    color: #fff;
  }

  .start {
    width: 48px;
    display: grid;
    place-items: center;
  }

  .start svg {
    width: 16px;
    height: 16px;
  }

  .search {
    width: 288px;
    box-sizing: border-box;
    background: #f1f1f1;
    border: 1px solid #bdbdbd;
    display: flex;
    align-items: center;
    color: #3c3c3c;
    font-size: 15px;
    letter-spacing: -0.5px;
  }

  .glass {
    width: 17px;
    height: 17px;
    margin: 0 11px;
  }

  .gift {
    width: 68px;
    height: 36px;
    margin-left: auto;
    margin-right: 5px;
  }

  .task {
    width: 48px;
    display: grid;
    place-items: center;
    box-sizing: border-box;
  }

  .task.open {
    border-bottom: 2px solid #76b9ed;
  }

  .task.edge {
    width: 40px;
    margin: 0 5px 0 7px;
  }

  .task.edge svg {
    width: 24px;
    height: 24px;
  }

  .task.files {
    background: #34474f;
    box-shadow: inset -4px 0 #25363e;
  }

  .task.files svg {
    width: 24px;
    height: 20px;
  }

  .task.firefox {
    width: 50px;
  }

  .task.firefox svg {
    width: 23px;
    height: 23px;
  }

  .tray {
    margin-left: auto;
    display: flex;
    align-items: center;
    gap: 6px;
    border-right: 1px solid #5b6470;
    margin-right: 4px;
    padding-right: 19px;
  }

  .tray svg {
    width: 18px;
    height: 18px;
  }

  .tray .up {
    width: 12px;
    height: 7px;
    margin-right: 4px;
  }

  .clock {
    width: 58px;
    display: flex;
    flex-direction: column;
    align-items: center;
    line-height: 18px;
    letter-spacing: -0.5px;
    margin-left: -1px;
    margin-right: 8px;
  }

  /* explorer window */
  .explorer {
    position: absolute;
    left: 309px;
    top: 40px;
    width: 786px;
    height: 593px;
    box-sizing: border-box;
    padding-left: 1px;
    background: #fff;
    display: flex;
    flex-direction: column;
  }

  .titlebar {
    height: 31px;
    display: flex;
    align-items: center;
    padding-left: 8px;
  }

  .bar {
    width: 1px;
    height: 13px;
    background: #aaa;
    margin: 0 7px;
  }

  .check {
    margin-left: 2px;
    margin-right: 6px;
  }

  .customize {
    width: 8px;
    height: 8px;
    margin-left: 7px;
  }

  .bar.second {
    margin-left: 7px;
  }

  .controls {
    margin-left: auto;
    margin-right: 18px;
    display: flex;
    gap: 34px;
  }

  .controls svg {
    width: 12px;
    height: 12px;
  }

  .tabs {
    height: 24px;
    box-sizing: border-box;
    display: flex;
    line-height: 24px;
    color: #333;
    letter-spacing: -0.3px;
    border-bottom: 1px solid #dadbdc;
  }

  .tabs span {
    text-align: center;
  }

  .file {
    width: 56px;
    background: #0063b1;
    color: #fff;
  }

  .home {
    width: 57px;
    height: 23px;
    background: #f5f6f7;
    border-right: 1px solid #dadbdc;
    border-top: 1px solid #dadbdc;
    box-sizing: content-box;
    line-height: 22px;
  }

  .share {
    width: 59px;
  }

  .view {
    width: 53px;
  }

  .collapse {
    width: 10px;
    height: 6px;
    margin: 8px 9px 0 auto;
  }

  .tabs .help {
    width: 16px;
    height: 16px;
    margin: 3px 4px 0 0;
    border-radius: 50%;
    background: #0067b8;
    color: #fff;
    font-weight: 700;
    line-height: 16px;
  }

  .ribbon {
    height: 92px;
    box-sizing: border-box;
    background: #f5f6f7;
    border-bottom: 1px solid #dadbdc;
    display: flex;
    color: #3b3b3b;
    letter-spacing: -0.4px;
  }

  .group {
    box-sizing: border-box;
    margin: 2px 0;
    border-right: 1px solid #dfe0e1;
    display: flex;
    flex-direction: column;
  }

  .clipboard {
    width: 263px;
  }

  .organize {
    width: 165px;
  }

  .new {
    width: 83px;
  }

  .opening {
    width: 133px;
  }

  .selecting {
    width: 115px;
  }

  .body {
    height: 71px;
    flex: none;
    display: flex;
  }

  .label {
    text-align: center;
    line-height: 16px;
    padding-right: 2px;
    color: #555;
  }

  .big {
    width: 42px;
    padding-top: 5px;
    display: flex;
    flex-direction: column;
    align-items: center;
    line-height: 13px;
    text-align: center;
    white-space: normal;
  }

  .big > svg:first-child {
    width: 32px;
    height: 32px;
    margin-bottom: 4px;
  }

  .big .caret {
    margin: 4px 0 0;
  }

  .pin {
    width: 66px;
    margin-left: 6px;
    color: #868686;
  }

  .folder-big {
    width: 48px;
  }

  .props {
    width: 64px;
    letter-spacing: -0.5px;
  }

  .small {
    display: flex;
    flex-direction: column;
    padding-top: 2px;
  }

  .small > div {
    height: 22px;
    display: flex;
    align-items: center;
  }

  .small > div span {
    margin-left: 3px;
  }

  .small.first {
    margin-left: 4px;
    letter-spacing: -0.5px;
  }

  .small.icons {
    margin-left: 1px;
  }

  .small.icons .caret {
    margin-left: 1px;
  }

  .opening .small {
    margin-left: -1px;
  }

  .small.two {
    box-sizing: border-box;
    flex: none;
    height: 64px;
    padding-top: 6px;
    padding-left: 8px;
    width: 85px;
  }

  .small.two > div {
    height: 29px;
    flex: none;
  }

  .small.two span {
    margin-left: 1px;
  }

  .small.two.right {
    border-left: 1px solid #dfe0e1;
    padding-left: 7px;
    width: 79px;
  }

  .small.two.right span {
    margin-left: 2px;
  }

  .selecting .small {
    padding-left: 7px;
    letter-spacing: -0.45px;
  }

  .disabled {
    color: #868686;
  }

  .address {
    height: 35px;
    display: flex;
    align-items: center;
    margin-top: -1px;
    padding-bottom: 1px;
    box-sizing: content-box;
  }

  .arrow {
    width: 14px;
    height: 14px;
    margin-left: 12px;
  }

  .forward {
    margin-left: 15px;
  }

  .recent {
    width: 8px;
    height: 6px;
    margin-left: 13px;
  }

  .upward {
    margin-left: 10px;
  }

  .path {
    width: 435px;
    height: 22px;
    box-sizing: border-box;
    border: 1px solid #d9d9d9;
    margin-left: 6px;
    padding-left: 2px;
    display: flex;
    align-items: center;
  }

  .path span {
    margin: 0 5px 0 7px;
    letter-spacing: -0.3px;
  }

  .path .chev {
    width: 9px;
    margin-left: 2px;
  }

  .path .i16 + .chev {
    margin-left: 5px;
  }

  .path-end {
    margin-left: auto;
    margin-right: 2px;
  }

  .path-end svg {
    width: 10px;
    height: 6px;
  }

  .refresh {
    width: 18px;
    height: 22px;
    box-sizing: border-box;
    border: 1px solid #d9d9d9;
    border-left: 0;
    display: grid;
    place-items: center;
  }

  .refresh svg {
    width: 12px;
    height: 12px;
  }

  .find {
    width: 202px;
    height: 22px;
    box-sizing: border-box;
    border: 1px solid #d9d9d9;
    margin-left: 11px;
    padding: 0 8px;
    display: flex;
    align-items: center;
    justify-content: space-between;
    color: #6d6d6d;
    letter-spacing: -0.45px;
  }

  .find svg {
    width: 12px;
    height: 12px;
  }

  .content {
    height: 387px;
    display: flex;
  }

  .tree {
    width: 139px;
    overflow: hidden;
  }

  .node {
    height: 24px;
    padding-left: 56px;
    display: flex;
    align-items: center;
    gap: 5px;
    letter-spacing: -0.4px;
  }

  .node span {
    margin-top: -1px;
  }

  .node.child {
    padding-left: 64px;
  }

  .node.current {
    background: #d9d9d9;
    letter-spacing: -0.5px;
  }

  .vscroll {
    width: 16px;
    background: #f0f0f0;
    display: flex;
    flex-direction: column;
    align-items: center;
    justify-content: space-between;
    padding: 4px 0;
    box-sizing: border-box;
  }

  .tree-scroll {
    margin-left: 1px;
  }

  .vscroll .thumb {
    width: 15px;
    background: #cdcdcd;
  }

  .tree-scroll .thumb {
    height: 61px;
    margin-top: 128px;
    margin-bottom: auto;
  }

  .list-scroll .thumb {
    height: 18px;
    margin-top: auto;
    margin-bottom: 3px;
  }

  .listing {
    margin-left: 4px;
    flex: 1;
  }

  .upper {
    height: 370px;
    display: flex;
  }

  .table {
    width: 593px;
    margin-left: 14px;
    overflow: hidden;
  }

  .head {
    height: 25px;
    display: flex;
    color: #4c607a;
    line-height: 26px;
    letter-spacing: -0.3px;
  }

  .head span {
    box-sizing: border-box;
    border-right: 1px solid #e4e4e4;
    padding-left: 6px;
  }

  .head .c-name {
    width: 258px;
    padding-left: 3px;
    letter-spacing: -0.3px;
    display: flex;
  }

  .c-name svg {
    width: 8px;
    height: 5px;
    margin-left: 88px;
  }

  .head .c-date {
    width: 144px;
  }

  .head .c-type {
    width: 120px;
  }

  .head .c-size {
    border: 0;
  }

  .rows {
    height: 345px;
    overflow: hidden;
  }

  .row {
    height: 21px;
    box-sizing: border-box;
    padding-left: 4px;
    display: flex;
    align-items: center;
    color: #6d6d6d;
  }

  .row:first-child {
    margin-top: -13px;
  }

  .row.selected {
    background: #cce8ff;
    box-shadow: inset 0 0 0 1px #99d1ff;
  }

  .row .name {
    width: 236px;
    margin-left: 4px;
    padding-right: 4px;
    box-sizing: content-box;
    color: #000;
    letter-spacing: -0.33px;
  }

  .row .name.long {
    letter-spacing: -0.46px;
  }

  .row .date {
    width: 144px;
    letter-spacing: -0.4px;
  }

  .row .type {
    width: 106px;
  }

  .row .size {
    flex: 1;
    text-align: right;
    letter-spacing: -0.45px;
  }

  .hscroll {
    width: 607px;
    height: 15px;
    margin-top: 1px;
    padding: 0 4px;
    box-sizing: border-box;
    background: #f0f0f0;
    display: flex;
    align-items: center;
    justify-content: space-between;
  }

  .hscroll .thumb {
    width: 556px;
    height: 15px;
    background: #cdcdcd;
    margin-right: auto;
    margin-left: 3px;
  }

  .status {
    height: 24px;
    padding-left: 14px;
    display: flex;
    align-items: center;
    color: #2a3f6b;
    letter-spacing: -0.4px;
  }

  .status span {
    margin-top: -1px;
  }

  .count {
    width: 71px;
  }

  .sel {
    width: 85px;
  }

  .modes {
    margin-left: auto;
    margin-right: 9px;
    display: flex;
    align-items: center;
    gap: 4px;
  }

  .details {
    width: 22px;
    height: 24px;
  }

  .thumbs {
    width: 14px;
    height: 12px;
  }

  .watermark {
    position: absolute;
    left: 1039px;
    top: 609px;
    width: 194px;
    height: 66px;
    opacity: 0.65;
  }

  .watermark text {
    font-family: 'Liberation Sans Narrow', Roboto, sans-serif;
    font-size: 51px;
    letter-spacing: 0;
  }
</style>
